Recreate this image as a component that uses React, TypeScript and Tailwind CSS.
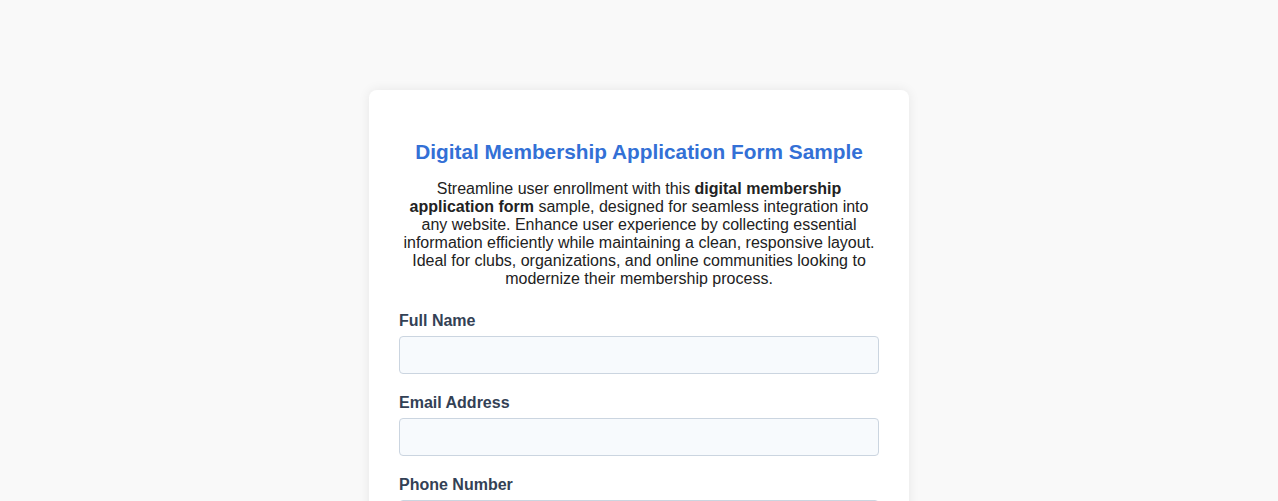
import React from "react";

const fields = [
  { id: "fullName", label: "Full Name", type: "text" },
  { id: "email", label: "Email Address", type: "email" },
  { id: "phone", label: "Phone Number", type: "tel" },
];

export default function App() {
  return (
    <div
      className="min-h-screen bg-[#f9f9f9] pt-[90px] pb-10"
      style={{ fontFamily: '"Liberation Sans", Arial, sans-serif' }}
    >
      <div className="mx-auto w-[540px] rounded-lg bg-white px-[30px] pt-[50px] pb-[30px] shadow-[0_0_12px_rgba(0,0,0,0.08)]">
        <h2 className="text-center text-[20.8px] leading-[23px] font-bold text-[#3370d6]">
          Digital Membership Application Form Sample
        </h2>
        <p className="mt-[17px] mb-[24px] text-center text-[16px] leading-[18px] text-[#222]">
          Streamline user enrollment with this <strong>digital membership application form</strong> sample,
          designed for seamless integration into any website. Enhance user experience by collecting essential
          information efficiently while maintaining a clean, responsive layout. Ideal for clubs, organizations,
          and online communities looking to modernize their membership process.
        </p>
        <form>
          {fields.map((f) => (
            <div key={f.id} className="mb-[20px]">
              <label htmlFor={f.id} className="block text-[16px] leading-[18px] font-bold text-[#334155]">
                {f.label}
              </label>
              <input
                id={f.id}
                type={f.type}
                className="mt-[6px] block h-[38px] w-full rounded-[4px] border border-[#cbd5e0] bg-[#f7fafd] px-[10px] text-[16px] outline-none"
              />
            </div>
          ))}
        </form>
      </div>
    </div>
  );
}
